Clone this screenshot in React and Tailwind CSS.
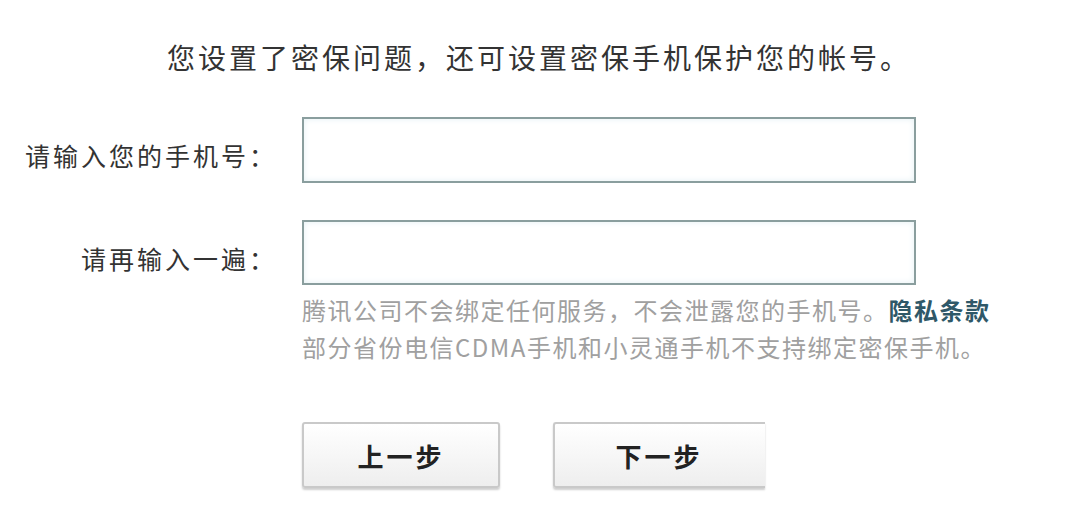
import React from "react";

const font = "font-['Noto_Sans_CJK_SC','Noto_Sans',sans-serif]";

function Field({ label, first }) {
  return (
    <div className="flex items-center">
      <label className="w-[302px] shrink-0 pr-[25px] text-right text-[25px] leading-[30px] tracking-[3px] text-[#333] pt-[10px]">
        {label}
      </label>
      <input
        type="text"
        className={`w-[614px] ${first ? "h-[66px]" : "h-[65px]"} border-2 border-[#8a9e9e] bg-white shadow-[inset_0_0_6px_#e4f0f4] outline-none`}
      />
    </div>
  );
}

function StepButton({ children, cut }) {
  return (
    <button
      className={`h-[66px] bg-gradient-to-b from-white to-[#eeeeee] text-[26px] font-bold tracking-[3px] text-[#222] shadow-[0_2px_2px_#cfcfcf] ${
        cut
          ? "w-[212px] rounded-l-[3px] border-y-2 border-l-2 border-[#c9c9c9] pr-[2px]"
          : "w-[198px] rounded-[3px] border-2 border-[#c9c9c9]"
      }`}
    >
      {children}
    </button>
  );
}

export default function App() {
  return (
    <div className={`w-[1070px] h-[524px] bg-white ${font}`}>
      <h1 className="pt-[42px] text-center text-[28px] leading-[30px] tracking-[3px] text-[#333] pl-[8px]">
        您设置了密保问题，还可设置密保手机保护您的帐号。
      </h1>

      <div className="mt-[45px] flex flex-col gap-[37px]">
        <Field label="请输入您的手机号：" first />
        <Field label="请再输入一遍：" />
      </div>

      {/* tips under the inputs */}
      <div className="ml-[302px] mt-[6px] text-[24px] leading-[37px] tracking-[1.5px] text-[#a0a0a0]">
        <p>
          腾讯公司不会绑定任何服务，不会泄露您的手机号。
          <a className="font-bold text-[#2f5868]">隐私条款</a>
        </p>
        <p>部分省份电信CDMA手机和小灵通手机不支持绑定密保手机。</p>
      </div>

      <div className="ml-[302px] mt-[57px] flex gap-[53px]">
        <StepButton>上一步</StepButton>
        <StepButton cut>下一步</StepButton>
      </div>
    </div>
  );
}
